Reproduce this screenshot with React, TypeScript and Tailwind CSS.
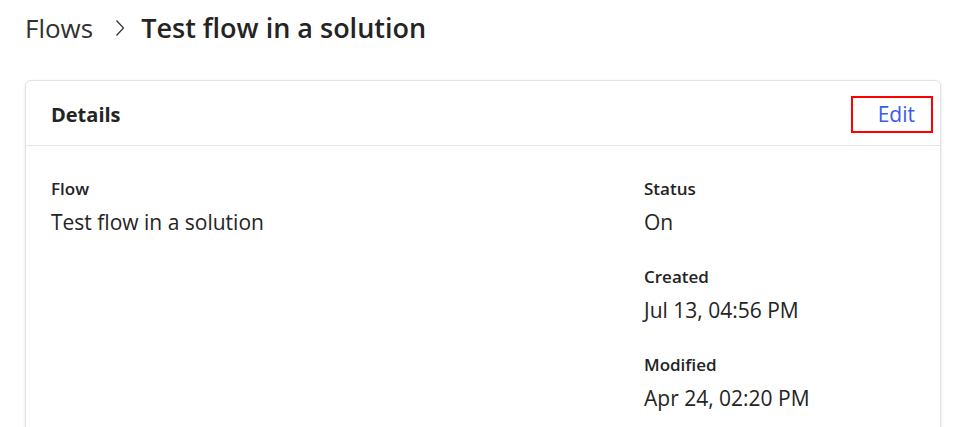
import React from "react";

function Field({ label, value }: { label: string; value: string }) {
  return (
    <div className="flex flex-col">
      <div className="text-[17px] leading-[22px] font-semibold text-[#242424]">{label}</div>
      <div className="mt-[10px] text-[21px] leading-[24px] text-[#242424]">{value}</div>
    </div>
  );
}

export default function App() {
  return (
    <div className="w-[965px] h-[427px] bg-white overflow-hidden font-['Open_Sans',sans-serif] text-[#242424]">
      <div className="flex items-center h-[56px] pl-[25px]">
        <span className="text-[26px] leading-[34px] text-[#323130]">Flows</span>
        <svg className="ml-[22px] mr-[16px]" width="10" height="18" viewBox="0 0 10 18" fill="none">
          <path d="M1.5 1.5 L8.5 9 L1.5 16.5" stroke="#323130" strokeWidth="1.2" />
        </svg>
        <span className="text-[27px] leading-[34px] font-semibold text-[#242424]">Test flow in a solution</span>
      </div>
      <div className="mt-[24px] ml-[25px] w-[916px] h-[400px] bg-white rounded-[6px] border border-[#e3e3e3] shadow-[0_1px_3px_rgba(0,0,0,0.12)]">
        <div className="flex items-center justify-between h-[65px] pt-[3px] pl-[25px] pr-[7px] border-b border-[#e6e6e6]">
          <span className="text-[20px] font-bold text-[#242424]">Details</span>
          <div className="w-[82px] h-[37px] border-2 border-[#ff0000] flex items-center justify-end pr-[16px]">
            <span className="text-[21px] text-[#3b5bf0]">Edit</span>
          </div>
        </div>
        <div className="flex pl-[25px] pt-[32px]">
          <div className="w-[593px]">
            <Field label="Flow" value="Test flow in a solution" />
          </div>
          <div className="flex flex-col gap-[32px]">
            <Field label="Status" value="On" />
            <Field label="Created" value="Jul 13, 04:56 PM" />
            <Field label="Modified" value="Apr 24, 02:20 PM" />
          </div>
        </div>
      </div>
    </div>
  );
}
